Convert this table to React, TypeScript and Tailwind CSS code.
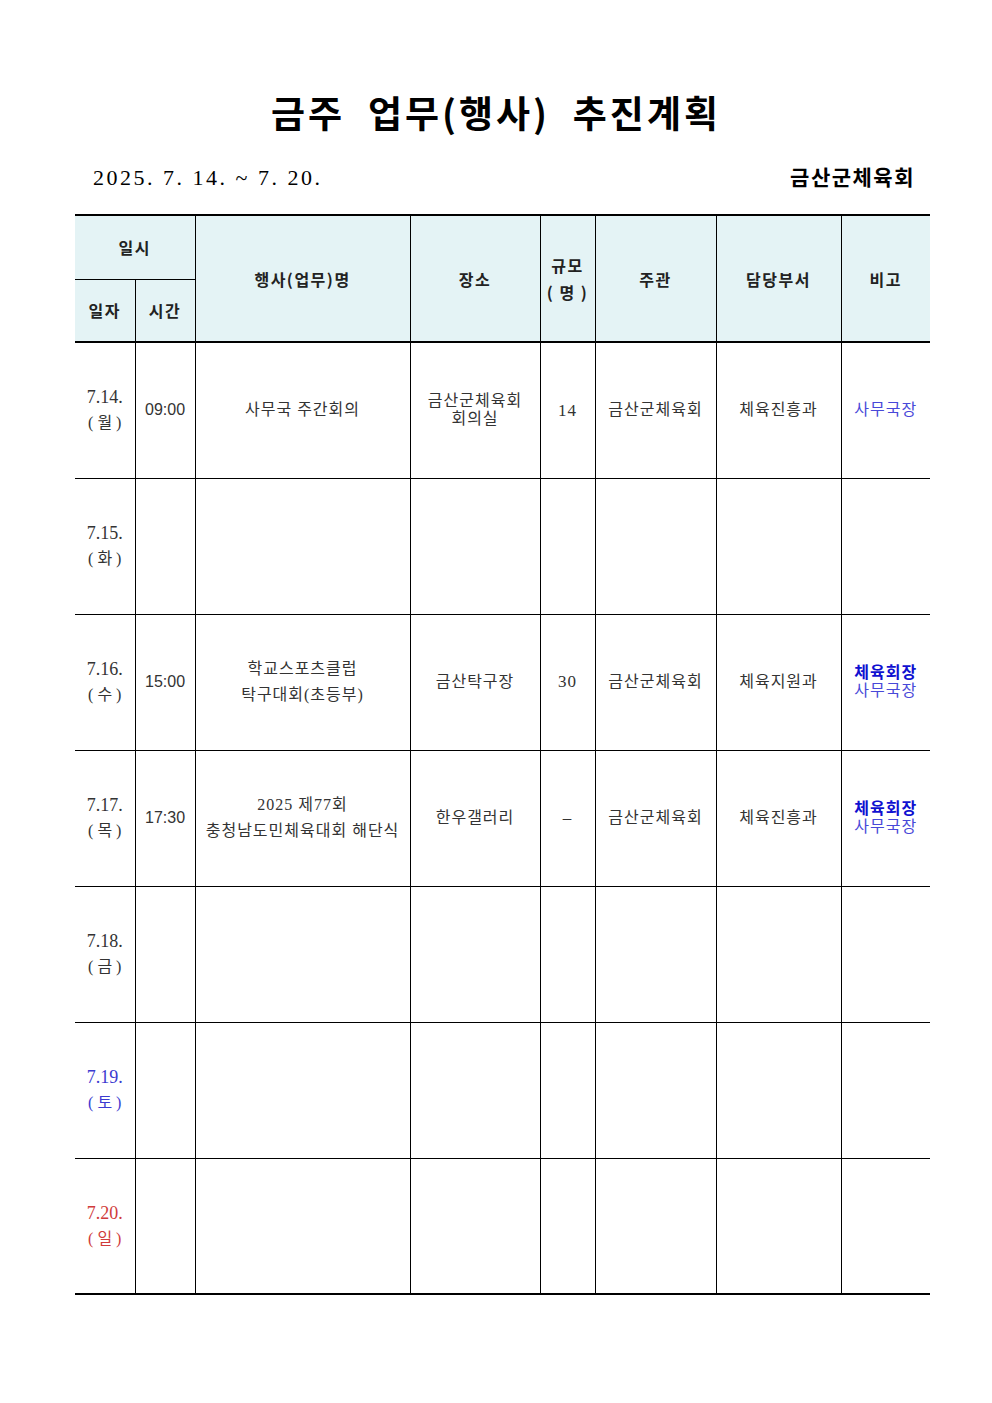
import React from "react";

const serif = "font-['Liberation_Serif','Noto_Sans_CJK_KR',serif]";

type Row = {
  date: string;
  day: string;
  tone?: "blue" | "red";
  time?: string;
  title?: string[];
  place?: string[];
  size?: string;
  host?: string;
  dept?: string;
  note?: { bold?: boolean; text: string }[];
};

const rows: Row[] = [
  {
    date: "7.14.",
    day: "월",
    time: "09:00",
    title: ["사무국 주간회의"],
    place: ["금산군체육회", "회의실"],
    size: "14",
    host: "금산군체육회",
    dept: "체육진흥과",
    note: [{ text: "사무국장" }],
  },
  { date: "7.15.", day: "화" },
  {
    date: "7.16.",
    day: "수",
    time: "15:00",
    title: ["학교스포츠클럽", "탁구대회(초등부)"],
    place: ["금산탁구장"],
    size: "30",
    host: "금산군체육회",
    dept: "체육지원과",
    note: [{ bold: true, text: "체육회장" }, { text: "사무국장" }],
  },
  {
    date: "7.17.",
    day: "목",
    time: "17:30",
    title: ["2025 제77회", "충청남도민체육대회 해단식"],
    place: ["한우갤러리"],
    size: "–",
    host: "금산군체육회",
    dept: "체육진흥과",
    note: [{ bold: true, text: "체육회장" }, { text: "사무국장" }],
  },
  { date: "7.18.", day: "금" },
  { date: "7.19.", day: "토", tone: "blue" },
  { date: "7.20.", day: "일", tone: "red" },
];

export default function App() {
  return (
    <div className={`w-[992px] h-[1403px] bg-white text-black ${serif}`}>
      <div className="pt-[86px] text-center">
        <h1 className="text-[37px] font-bold tracking-[3px] leading-[52px] font-['Noto_Sans_CJK_KR',sans-serif]">
          금주&nbsp; 업무(행사)&nbsp; 추진계획
        </h1>
      </div>
      <div className="mt-[22px] flex justify-between items-center pl-[93px] pr-[77px] h-[34px]">
        <span className="text-[22px] tracking-[2.5px]">2025. 7. 14. ~ 7. 20.</span>
        <span className="text-[21px] tracking-[1.5px] font-bold font-['Noto_Sans_CJK_KR',sans-serif]">
          금산군체육회
        </span>
      </div>
      <table className="mt-[20px] ml-[75px] w-[855px] table-fixed border-collapse text-[16px] tracking-[1px] text-[#333]">
        <colgroup>
          <col className="w-[60px]" />
          <col className="w-[60px]" />
          <col className="w-[215px]" />
          <col className="w-[130px]" />
          <col className="w-[55px]" />
          <col className="w-[121px]" />
          <col className="w-[125px]" />
          <col className="w-[89px]" />
        </colgroup>
        <thead className="bg-[#e4f3f5] font-bold text-[#222] tracking-[1.5px] font-['Noto_Sans_CJK_KR',sans-serif]">
          <tr className="h-[64px] border-t-2 border-black">
            <th colSpan={2} className="border-r border-b border-black font-bold">
              일시
            </th>
            <th rowSpan={2} className="border-r border-black font-bold">
              행사(업무)명
            </th>
            <th rowSpan={2} className="border-r border-black font-bold">
              장소
            </th>
            <th rowSpan={2} className="border-r border-black font-bold leading-[27px]">
              규모
              <br />( 명 )
            </th>
            <th rowSpan={2} className="border-r border-black font-bold">
              주관
            </th>
            <th rowSpan={2} className="border-r border-black font-bold">
              담당부서
            </th>
            <th rowSpan={2} className="font-bold">
              비고
            </th>
          </tr>
          <tr className="h-[63px] border-b-2 border-black">
            <th className="border-r border-black font-bold">일자</th>
            <th className="border-r border-black font-bold">시간</th>
          </tr>
        </thead>
        <tbody className="text-center">
          {rows.map((r, i) => (
            <tr
              key={r.date}
              className={`h-[136px] ${i === rows.length - 1 ? "border-b-2" : "border-b"} border-black`}
            >
              <td
                className={`border-r border-black leading-[25px] tracking-normal ${
                  r.tone === "blue"
                    ? "text-[#3b3bd0]"
                    : r.tone === "red"
                    ? "text-[#d03b3b]"
                    : "text-[#333]"
                }`}
              >
                <div className="text-[18px]">{r.date}</div>
                <div className="text-[16px]">( {r.day} )</div>
              </td>
              <td className="border-r border-black text-[16px] tracking-normal font-['Liberation_Sans',sans-serif]">
                {r.time}
              </td>
              <td className="border-r border-black leading-[26px]">
                {r.title?.map((t) => (
                  <div key={t}>{t}</div>
                ))}
              </td>
              <td className="border-r border-black leading-[18px]">
                {r.place?.map((t) => (
                  <div key={t}>{t}</div>
                ))}
              </td>
              <td className="border-r border-black text-[17px]">{r.size}</td>
              <td className="border-r border-black">{r.host}</td>
              <td className="border-r border-black">{r.dept}</td>
              <td className="leading-[18px]">
                {r.note?.map((n) =>
                  n.bold ? (
                    <div key={n.text} className="font-bold text-[#1010d0]">
                      {n.text}
                    </div>
                  ) : (
                    <div key={n.text} className="text-[#4848d8]">
                      {n.text}
                    </div>
                  )
                )}
              </td>
            </tr>
          ))}
        </tbody>
      </table>
    </div>
  );
}
